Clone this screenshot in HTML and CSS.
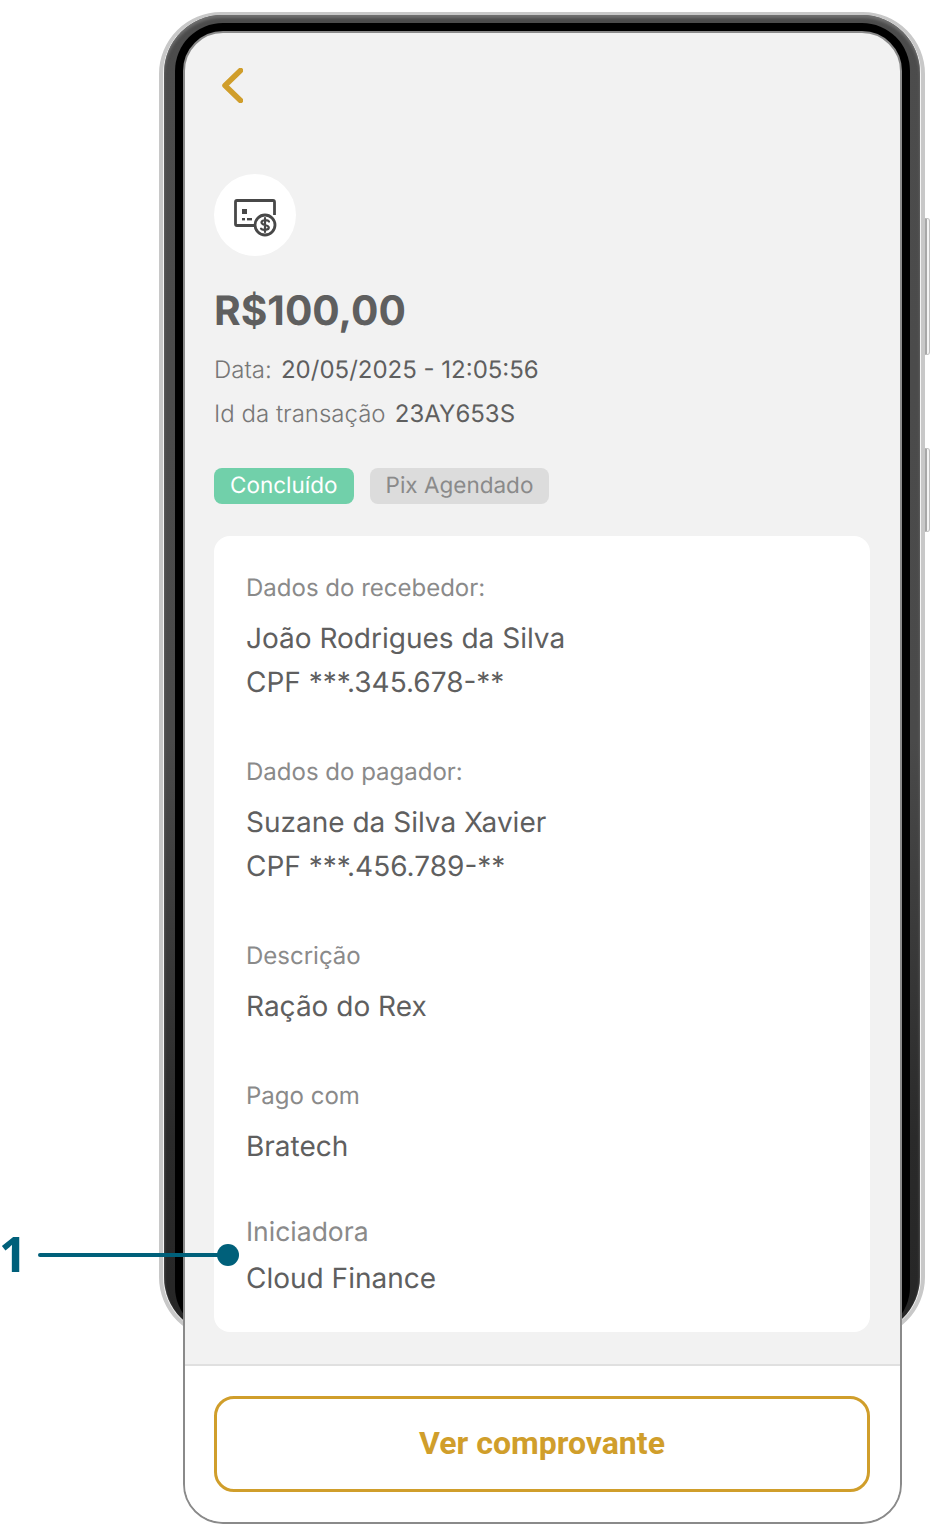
FILE: index.html
```html
<!DOCTYPE html>
<html lang="pt-BR">
<head>
<meta charset="UTF-8">
<meta name="viewport" content="width=device-width, initial-scale=1.0">
<title>Detalhes da transação</title>
<link rel="stylesheet" href="styles.css">
</head>
<body>

<div class="stage">
  <!-- Moldura do celular -->
  <div class="device">
    <span class="side-btn side-btn-top"></span>
    <span class="side-btn side-btn-bottom"></span>
    <div class="bezel">
      <div class="bezel-inner">
        <div class="screen">
          <div class="screen-content">
            <a class="back-btn" href="#" aria-label="Voltar">
              <svg width="21" height="35" viewBox="0 0 21 35" fill="none">
                <path d="M18.500 2.500 L3 17.500 L18.500 32.500" stroke="#d09e2b" stroke-width="5.500" stroke-linecap="round" stroke-linejoin="round"/>
              </svg>
            </a>

            <div class="icon-circle">
              <svg class="icon-receipt" width="44" height="40" viewBox="0 0 44 40" fill="none">
                <path d="M22 27.500 H4 a1.500 1.500 0 0 1 -1.500 -1.500 V4 A1.500 1.500 0 0 1 4 2.500 H40 A1.500 1.500 0 0 1 41.500 4 V17" stroke="#484848" stroke-width="2.800"/>
                <rect x="9" y="11" width="5" height="5" fill="#484848"/>
                <rect x="9" y="20" width="3" height="2.400" fill="#484848"/>
                <rect x="14" y="20" width="5" height="2.400" fill="#484848"/>
                <circle cx="32" cy="27" r="10" fill="#fff" stroke="#484848" stroke-width="2.800"/>
                <path d="M36 23.500 C35 21.800 28.500 21.500 28.500 24.500 C28.500 27.500 35.800 26.500 35.800 29.500 C35.800 32.500 29 32.300 28 30.700 M32 20 V34" stroke="#484848" stroke-width="2.200" stroke-linecap="round"/>
              </svg>
            </div>

            <h1 class="amount">R$100,00</h1>
            <p class="meta"><span class="meta-label">Data:</span> 20/05/2025 - 12:05:56</p>
            <p class="meta"><span class="meta-label">Id da transação</span> 23AY653S</p>

            <div class="tags">
              <span class="tag tag-done">Concluído</span>
              <span class="tag tag-info">Pix Agendado</span>
            </div>

            <div class="card">
              <div class="info-group">
                <p class="info-label">Dados do recebedor:</p>
                <p class="info-value">João Rodrigues da Silva</p>
                <p class="info-value">CPF ***.345.678-**</p>
              </div>
              <div class="info-group">
                <p class="info-label">Dados do pagador:</p>
                <p class="info-value">Suzane da Silva Xavier</p>
                <p class="info-value">CPF ***.456.789-**</p>
              </div>
              <div class="info-group">
                <p class="info-label">Descrição</p>
                <p class="info-value">Ração do Rex</p>
              </div>
              <div class="info-group">
                <p class="info-label">Pago com</p>
                <p class="info-value">Bratech</p>
              </div>
              <div class="info-group info-group-last">
                <p class="info-label">Iniciadora</p>
                <p class="info-value">Cloud Finance</p>
              </div>
            </div>
          </div>

          <div class="screen-footer">
            <button class="receipt-btn" type="button">Ver comprovante</button>
          </div>
        </div>
      </div>
    </div>
  </div>

  <!-- Marcador da anotação -->
  <div class="marker">
    <span class="marker-num">1</span>
    <span class="marker-line"></span>
    <span class="marker-dot"></span>
  </div>
</div>

</body>
</html>
```

FILE: styles.css
```css
* {
  box-sizing: border-box;
}
html, body {
  margin: 0;
  padding: 0;
  background-color: #ffffff;
}
body {
  font-family: Inter, "Liberation Sans", sans-serif;
  color: #5a5a5a;
  text-rendering: geometricPrecision;
}
p, h1 {
  margin: 0;
}
.stage {
  position: relative;
  width: 930px;
  height: 1524px;
  padding: 12px 0 0 159px;
  overflow: hidden;
}

/* Moldura */
.device {
  position: relative;
  width: 766px;
  height: 1327px;
  padding: 0 1px;
  background-color: #f4f4f4;
  border: 4px solid #c8c8c8;
  border-top-width: 3px;
  border-radius: 62px;
}
.bezel {
  height: 100%;
  padding: 8px 10px 0 10.500px;
  background: linear-gradient(180deg, #4c4c4c 0, #4a4a4a 55%, #2a2a2a 85%, #262626 100%);
  border-radius: 58px;
  box-shadow: inset 0 3px 3px #707070;
}
.bezel-inner {
  height: 100%;
  padding: 8px 8px 0;
  background-color: #000000;
  border-radius: 48px;
}
.screen {
  display: flex;
  flex-direction: column;
  width: 719.500px;
  height: 1493px;
  background-color: #f2f2f2;
  border: 2px solid #8a8a8a;
  border-radius: 40px;
  overflow: hidden;
}
.screen-content {
  flex: 1;
  padding: 35px 30px 0 29.500px;
}
.side-btn {
  position: absolute;
  right: -9px;
  width: 5px;
  background-color: #f4f4f4;
  border: 1px solid #c0c0c0;
  border-left: 2px solid #a8a8a8;
  border-radius: 0 3px 3px 0;
}
.side-btn-top {
  top: 203px;
  height: 137px;
}
.side-btn-bottom {
  top: 433px;
  height: 84px;
}

/* Topo */
.back-btn {
  display: block;
  width: 21px;
  height: 35px;
  margin-left: 8px;
}
.back-btn svg {
  display: block;
}
.icon-circle {
  display: flex;
  align-items: center;
  justify-content: center;
  width: 82px;
  height: 82px;
  margin-top: 71px;
  background-color: #ffffff;
  border-radius: 50%;
}
.icon-receipt {
  margin-top: 6px;
}
.amount {
  margin-top: 31px;
  font-size: 40.700px;
  line-height: 48px;
  font-weight: 700;
  color: #5f5f5f;
}
.meta {
  margin-top: 14px;
  font-size: 24px;
  line-height: 30px;
  color: #5f5f5f;
}
.amount + .meta {
  margin-top: 20px;
}
.meta-label {
  margin-right: 2.500px;
  font-weight: 300;
  color: #777;
}
.tags {
  display: flex;
  gap: 16px;
  margin-top: 39px;
}
.tag {
  height: 36px;
  padding: 0 16px;
  font-size: 22.500px;
  line-height: 36px;
  border-radius: 8px;
}
.tag-done {
  background-color: #71d0aa;
  color: #ffffff;
}
.tag-info {
  background-color: #dcdcdc;
  color: #8a8a8a;
}

/* Cartão */
.card {
  height: 796px;
  margin-top: 32px;
  padding: 37px 32px 0;
  background-color: #ffffff;
  border-radius: 16px;
}
.info-group {
  margin-bottom: 53px;
}
.info-group-last {
  margin-top: -4px;
}
.info-label {
  margin-bottom: 13px;
  font-size: 24px;
  font-weight: 385;
  line-height: 30px;
  color: #8a8a8a;
}
.info-group-last .info-label {
  margin-bottom: 9px;
  font-size: 26.500px;
  font-weight: 400;
}
.info-value {
  font-size: 28px;
  font-weight: 375;
  line-height: 44px;
  color: #5f5f5f;
}

/* Rodapé */
.screen-footer {
  height: 158px;
  padding-top: 30px;
  padding-left: 29.500px;
  padding-right: 30px;
  background-color: #ffffff;
  border-top: 2px solid #e0e0e0;
}
.receipt-btn {
  display: block;
  width: 100%;
  height: 96px;
  padding-bottom: 3px;
  font-family: Roboto, "Liberation Sans", sans-serif;
  font-size: 32px;
  font-weight: 700;
  color: #d09e2b;
  background-color: #ffffff;
  border: 3px solid #d09e2b;
  border-radius: 20px;
}

/* Anotação */
.marker {
  position: absolute;
  top: 1225px;
  left: 0;
  width: 240px;
  height: 60px;
}
.marker-num {
  position: absolute;
  left: -1px;
  top: -1px;
  font-family: "Open Sans", "Liberation Sans", sans-serif;
  font-size: 49px;
  line-height: 60px;
  font-weight: 700;
  color: #00607a;
}
.marker-line {
  position: absolute;
  left: 38px;
  top: 28px;
  width: 190px;
  height: 4px;
  background-color: #00607a;
  border-radius: 2px;
}
.marker-dot {
  position: absolute;
  left: 217px;
  top: 19px;
  width: 22px;
  height: 22px;
  background-color: #00607a;
  border-radius: 50%;
}
```
